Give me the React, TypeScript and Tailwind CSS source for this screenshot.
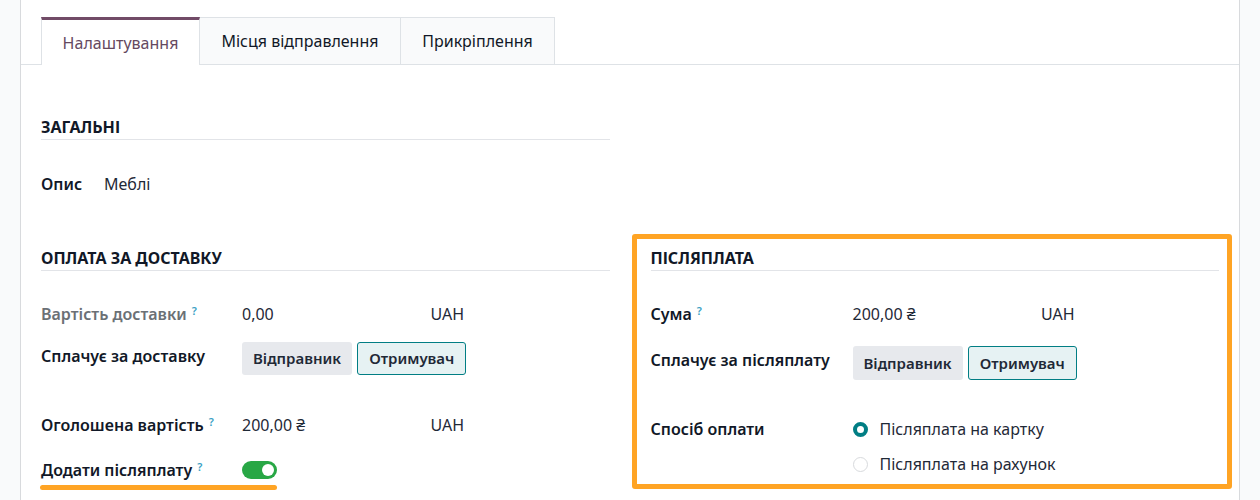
import React from 'react';

const font = { fontFamily: '"Noto Sans", "Open Sans", sans-serif' };

const Help: React.FC = () => (
    <sup className="ml-[5px] text-[11px] font-semibold text-[#3b9fc4] relative -top-[5px]">?</sup>
);

const SectionTitle: React.FC<{ title: string }> = ({ title }) => (
    <div className="border-b border-[#e2e4e8] pb-[2px]">
        <h3 className="text-[16px] leading-[20px] font-bold uppercase text-[#111827]">{title}</h3>
    </div>
);

const PayerButtons: React.FC<{ height: string }> = ({ height }) => (
    <div className="flex gap-[5px]">
        <button className={`${height} px-[11px] rounded-[3px] bg-[#e7e9ed] text-[15px] font-semibold text-[#1f2937]`}>
            Відправник
        </button>
        <button className={`${height} px-[11px] rounded-[3px] bg-[#e6f2f3] border border-[#017e84] text-[15px] font-semibold text-[#1f2937]`}>
            Отримувач
        </button>
    </div>
);

const Money: React.FC<{ value: string }> = ({ value }) => (
    <div className="w-[222px] flex justify-between text-[16px] leading-[20px] text-[#1f2937]">
        <span>{value}</span>
        <span>UAH</span>
    </div>
);

const Radio: React.FC<{ checked?: boolean; label: string }> = ({ checked, label }) => (
    <div className="flex items-center gap-[12px] h-[20px]">
        <span
            className={`w-[15px] h-[15px] rounded-full bg-white ${
                checked ? 'border-[4px] border-[#017e84]' : 'border border-[#d8dadd]'
            }`}
        />
        <span className="text-[16px] text-[#1f2937]">{label}</span>
    </div>
);

export default function App() {
    return (
        <div className="min-h-[500px] bg-[#f9fafb] flex px-[20px]" style={font}>
            <div className="flex-1 bg-white border-x border-[#d8dadd] min-h-[500px]">
                {/* Tabs */}
                <div className="flex pt-[17px] pl-[20px] border-b border-[#dee2e6]">
                    <div className="-mb-px h-[48px] w-[159px] flex items-center justify-center border-t-[3px] border-t-[#714b67] border-x border-x-[#dee2e6] bg-white text-[16px] text-[#65495f]">
                        Налаштування
                    </div>
                    <div className="h-[47px] w-[201px] flex items-center justify-center border-t border-r border-[#dee2e6] bg-[#f9fafb] text-[16px] text-[#111827]">
                        Місця відправлення
                    </div>
                    <div className="h-[47px] w-[154px] flex items-center justify-center border-t border-r border-[#dee2e6] bg-[#f9fafb] text-[16px] text-[#111827]">
                        Прикріплення
                    </div>
                </div>

                <div className="px-[20px] pt-[52px] grid grid-cols-2 gap-x-[41px]">
                    {/* General */}
                    <div>
                        <SectionTitle title="Загальні" />
                        <div className="mt-[34px] flex text-[16px] leading-[20px]">
                            <span className="font-semibold text-[#111827] w-[63px]">Опис</span>
                            <span className="text-[#1f2937]">Меблі</span>
                        </div>
                    </div>
                    <div />

                    {/* Delivery payment */}
                    <div className="mt-[54px]">
                        <SectionTitle title="Оплата за доставку" />
                        <div className="mt-[33px] flex items-center">
                            <span className="w-[201px] text-[16px] leading-[20px] font-semibold text-[#6b7075]">
                                Вартість доставки
                                <Help />
                            </span>
                            <Money value="0,00" />
                        </div>
                        <div className="mt-[18px] flex items-start">
                            <span className="w-[201px] pt-[4px] text-[16px] leading-[20px] font-semibold text-[#111827]">
                                Сплачує за доставку
                            </span>
                            <PayerButtons height="h-[33px]" />
                        </div>
                        <div className="mt-[40px] flex items-center">
                            <span className="w-[201px] text-[16px] leading-[20px] font-semibold text-[#111827]">
                                Оголошена вартість
                                <Help />
                            </span>
                            <Money value="200,00 ₴" />
                        </div>
                        <div className="mt-[25px] inline-flex flex-col">
                            <div className="flex items-center">
                                <span className="w-[201px] text-[16px] leading-[20px] font-semibold text-[#111827]">
                                    Додати післяплату
                                    <Help />
                                </span>
                                <span className="w-[35px] h-[18px] rounded-full bg-[#28a745] flex items-center justify-end pr-[3px]">
                                    <span className="w-[12px] h-[12px] rounded-full bg-white" />
                                </span>
                            </div>
                            <div className="mt-[5px] -ml-[1px] h-[5px] rounded-full bg-[#ffa424]" />
                        </div>
                    </div>

                    {/* Cash on delivery */}
                    <div className="mt-[54px] relative">
                        <div className="absolute -left-[19px] -right-[13px] -top-[14px] h-[255px] border-[5px] border-[#ffa424] rounded-[3px] pointer-events-none" />
                        <SectionTitle title="Післяплата" />
                        <div className="mt-[33px] flex items-center">
                            <span className="w-[202px] text-[16px] leading-[20px] font-semibold text-[#111827]">
                                Сума
                                <Help />
                            </span>
                            <Money value="200,00 ₴" />
                        </div>
                        <div className="mt-[22px] flex items-start">
                            <span className="w-[202px] pt-[4px] text-[16px] leading-[20px] font-semibold text-[#111827]">
                                Сплачує за післяплату
                            </span>
                            <PayerButtons height="h-[34px]" />
                        </div>
                        <div className="mt-[39px] flex items-start">
                            <span className="w-[202px] text-[16px] leading-[20px] font-semibold text-[#111827]">
                                Спосіб оплати
                            </span>
                            <div className="flex flex-col gap-[15px]">
                                <Radio checked label="Післяплата на картку" />
                                <Radio label="Післяплата на рахунок" />
                            </div>
                        </div>
                    </div>
                </div>
            </div>
        </div>
    );
}
